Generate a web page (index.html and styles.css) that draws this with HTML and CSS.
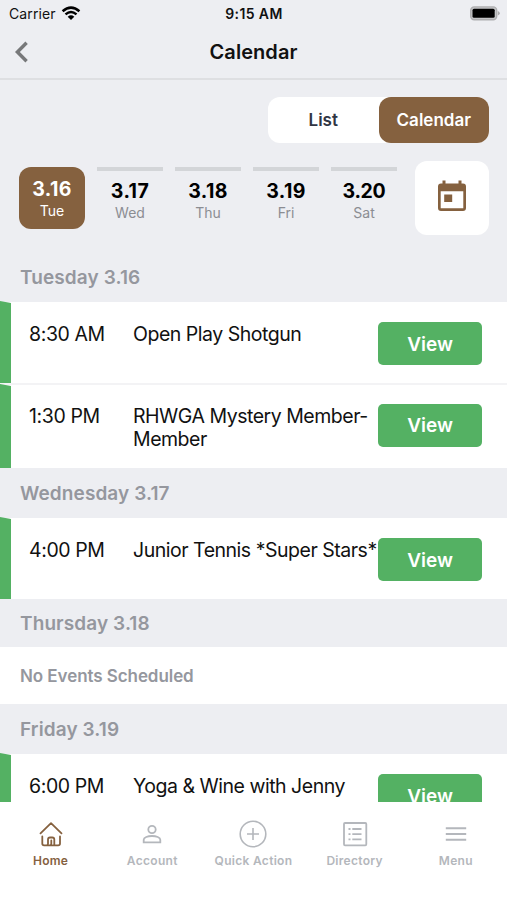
FILE: index.html
```html
<!DOCTYPE html>
<html lang="en">
<head>
<meta charset="utf-8">
<title>Calendar</title>
<link rel="stylesheet" href="styles.css">
</head>
<body>
<div class="app">
  <div class="status">
    <div class="carrier"><span>Carrier</span>
      <svg width="20" height="15" viewBox="0 0 20 15" fill="none" stroke="#000" stroke-width="2.5"><path d="M1.6 5.3Q10 -2 18.400 5.300"/><path d="M4.500 8.400Q10 3.700 15.500 8.400"/><path d="M6.700 10.700Q10 8 13.300 10.700L10 14Z" fill="#000" stroke="none"/></svg>
    </div>
    <div class="clock">9:15 AM</div>
    <svg class="battery" width="31" height="15" viewBox="0 0 31 15"><rect x="1.700" y=".9" width="26" height="12.800" rx="3.500" fill="#c4c5c7" stroke="#aeaeb0" stroke-width="1.400"/><rect x="3.500" y="2.800" width="22.200" height="9" rx="1.500" fill="#000"/><path d="M28.800 5q2 .8 2 2.300t-2 2.300Z" fill="#aaaaac"/></svg>
  </div>
  <header class="nav">
    <svg class="back" width="16" height="24" viewBox="0 0 16 24" fill="none" stroke="#77787a" stroke-width="3.400"><path d="M12.600 2.800L3.400 12l9.200 9.200"/></svg>
    <h1>Calendar</h1>
  </header>
  <div class="toggle-row"><div class="toggle"><span class="opt">List</span><span class="opt on">Calendar</span></div></div>
  <div class="week">
    <div class="day selected"><b>3.16</b><span>Tue</span></div>
    <div class="day"><b>3.17</b><span>Wed</span></div>
    <div class="day"><b>3.18</b><span>Thu</span></div>
    <div class="day"><b>3.19</b><span>Fri</span></div>
    <div class="day"><b class="wide">3.20</b><span>Sat</span></div>
    <div class="picker"><svg width="28" height="32" viewBox="0 0 28 32"><path fill="#85613f" fill-rule="evenodd" d="M4.500 .5h3v3h13v-3h3v3h1.500a3 3 0 0 1 3 3V28a3 3 0 0 1-3 3H3a3 3 0 0 1-3-3V6.500a3 3 0 0 1 3-3h1.500ZM2.700 11.300V28.300H25.300V11.300Z"/><rect x="6.200" y="14.500" width="8" height="7.500" fill="#85613f"/></svg></div>
  </div>
  <main class="events">
    <h2 class="h-first">Tuesday 3.16</h2>
    <div class="event e1"><time>8:30 AM</time><p>Open Play Shotgun</p><a class="view">View</a></div>
    <div class="event e2"><time>1:30 PM</time><p>RHWGA Mystery Member-<br>Member</p><a class="view">View</a></div>
    <h2>Wednesday 3.17</h2>
    <div class="event e3"><time>4:00 PM</time><p>Junior Tennis *Super Stars*</p><a class="view">View</a></div>
    <h2 class="h-thu">Thursday 3.18</h2>
    <div class="none">No Events Scheduled</div>
    <h2>Friday 3.19</h2>
    <div class="event e4"><time>6:00 PM</time><p>Yoga &amp; Wine with Jenny</p><a class="view">View</a></div>
  </main>
  <nav class="tabs">
    <div class="tab active"><svg width="28" height="28" viewBox="0 0 28 28" fill="none" stroke="currentColor" stroke-width="1.800" stroke-linecap="round" stroke-linejoin="round"><path d="M3.500 13.300L14 3.200l10.500 10.100M5.300 16.500v7q0 1.800 1.800 1.800H9.500q1.500 0 1.500-1.500v-4.300q0-2 2-2h2.300q2 0 2 2v5.300M9.500 25.300h11.700q1.800 0 1.800-1.800v-7M14.300 20.500v3.300q0 1.500-1.500 1.500"/></svg><span>Home</span></div>
    <div class="tab"><svg width="28" height="28" viewBox="0 0 28 28" fill="none" stroke="currentColor" stroke-width="1.800"><circle cx="14" cy="9.500" r="3.700"/><path d="M5.700 22.300v-2.600c0-2.200 4-3.700 8.300-3.700s8.300 1.500 8.300 3.700v2.600Z"/></svg><span>Account</span></div>
    <div class="tab"><svg width="28" height="28" viewBox="0 0 28 28" fill="none" stroke="currentColor" stroke-width="1.600"><circle cx="14" cy="14" r="12.800"/><path d="M14 8v12M8 14h12"/></svg><span>Quick Action</span></div>
    <div class="tab"><svg width="28" height="28" viewBox="0 0 28 28" fill="none" stroke="currentColor" stroke-width="1.800"><rect x="3" y="3" width="22.300" height="22.300" rx="1"/><path d="M11.300 9h9.200M11.300 14.200h9.200M11.300 19.400h9.200M7.500 9h2M7.500 14.200h2M7.500 19.400h2"/></svg><span>Directory</span></div>
    <div class="tab"><svg width="28" height="28" viewBox="0 0 28 28" fill="none" stroke="currentColor" stroke-width="2"><path d="M3.800 8.300h20.400M3.800 14h20.400M3.800 19.700h20.400"/></svg><span>Menu</span></div>
  </nav>
</div>
</body>
</html>
```

FILE: styles.css
```css
* { box-sizing: border-box; margin: 0; padding: 0; }
body { background: #edeef2; font-family: Inter, "Liberation Sans", sans-serif; color: #111; }
.app { width: 507px; height: 900px; display: flex; flex-direction: column; overflow: hidden; white-space: nowrap; }
.status { height: 28px; display: grid; grid-template-columns: 1fr auto 1fr; align-items: center; padding: 0 7px 1px 9px; font-size: 14px; flex: none; }
.carrier { display: flex; align-items: center; gap: 5px; letter-spacing: .1px; }
.clock { font-weight: 600; letter-spacing: .4px; margin-left: -1px; }
.battery { justify-self: end; }
.nav { height: 52px; flex: none; border-bottom: 2px solid #dedfe2; display: grid; grid-template-columns: 40px 1fr 40px; align-items: center; padding-bottom: 2px; }
.back { margin-left: 14px; }
.nav h1 { font-size: 20px; font-weight: 600; text-align: center; letter-spacing: .05px; }
.toggle-row { display: flex; justify-content: flex-end; padding: 17px 18px 0 0; flex: none; }
.toggle { display: flex; width: 221px; height: 46px; border-radius: 12px; background: #fff; }
.opt { flex: 1; display: flex; align-items: center; justify-content: center; font-size: 17px; font-weight: 600; color: #303543; border-radius: 12px; }
.opt.on { background: #85613f; color: #fff; }
.week { height: 92px; flex: none; display: flex; padding: 24px 18px 0 19px; gap: 12px; }
.day { width: 66px; height: 62px; flex: none; border-top: 4px solid #d3d5d8; display: flex; flex-direction: column; align-items: center; padding-top: 8px; }
.day b { font-size: 19.500px; line-height: 25px; font-weight: 700; letter-spacing: .4px; color: #000; }
.day b.wide { letter-spacing: -.3px; }
.day span { font-size: 14px; line-height: 17px; color: #8b8d92; }
.day.selected { border: 0; border-radius: 12px; background: #85613f; padding-top: 10px; }
.day.selected b, .day.selected span { color: #fff; }
.picker { width: 74px; height: 74px; border-radius: 12px; background: #fff; margin: -6px 0 0 auto; display: flex; align-items: center; justify-content: center; padding-bottom: 4px; }
.events { flex: 1; min-height: 0; overflow: hidden; }
.events h2 { height: 50px; padding-left: 20px; background: #edeef2; font-size: 19px; line-height: 51px; font-weight: 600; letter-spacing: .1px; color: #95979e; }
.events .h-first { height: 67px; line-height: 85px; }
.events .h-thu { height: 48px; line-height: 49px; }
.event { position: relative; display: grid; grid-template-columns: 104px 245px auto; align-items: start; padding: 19px 0 0 29px; background: #fff; font-size: 19.500px; line-height: 23px; color: #111; }
.event time { padding-top: 1px; letter-spacing: -.4px; }
.event p { padding-top: 1px; letter-spacing: -.48px; }
.event::before { content: ""; position: absolute; left: 0; top: -1px; bottom: 0; width: 11px; background: #54b163; clip-path: polygon(0 0, 100% 2px, 100% 100%, 0 100%); }
.e1 { height: 81px; }
.e2 { height: 85px; border-top: 2px solid #f3f3f5; }
.e3 { height: 81px; }
.e4 { height: 100px; }
.e1 time, .e1 p, .e3 time, .e3 p, .e4 time, .e4 p { padding-top: 2px; }
.view { width: 104px; height: 43px; border-radius: 5px; background: #54b163; color: #fff; font-size: 19px; font-weight: 600; line-height: 44px; text-align: center; }
.e1 .view, .e3 .view, .e4 .view { margin-top: .5px; line-height: 45px; }
.none { height: 57px; background: #fff; padding-left: 20px; line-height: 58px; font-size: 17px; font-weight: 600; letter-spacing: -.07px; color: #95979e; }
.tabs { height: 98px; flex: none; background: #fff; display: grid; grid-template-columns: repeat(5, 101.200px); padding-top: 18px; }
.tab { display: flex; flex-direction: column; align-items: center; gap: 5px; color: #b4b7bc; }
.tab + .tab { padding-left: 1px; }
.tab span { font-size: 12px; line-height: 16px; font-weight: 600; letter-spacing: .3px; }
.tab.active { color: #85613f; }
```
